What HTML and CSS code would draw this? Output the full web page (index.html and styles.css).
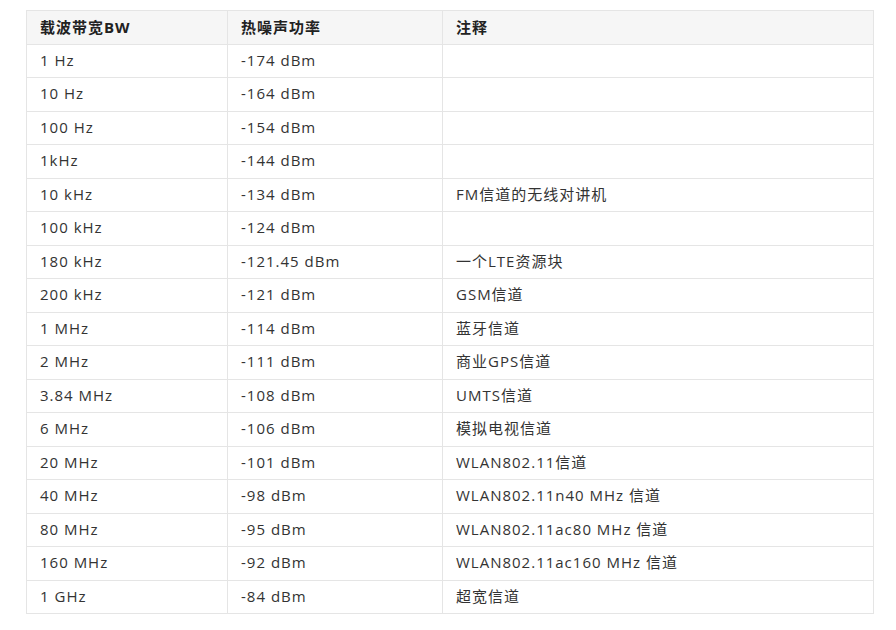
FILE: index.html
```html
<!DOCTYPE html>
<html lang="zh-CN">
<head>
<meta charset="utf-8">
<link rel="stylesheet" href="styles.css">
</head>
<body>
<div class="wrap">
<table class="data">
<colgroup><col class="c1"><col class="c2"><col class="c3"></colgroup>
<thead>
<tr><th>载波带宽BW</th><th>热噪声功率</th><th>注释</th></tr>
</thead>
<tbody>
<tr><td>1 Hz</td><td>-174 dBm</td><td></td></tr>
<tr><td>10 Hz</td><td>-164 dBm</td><td></td></tr>
<tr><td>100 Hz</td><td>-154 dBm</td><td></td></tr>
<tr><td>1kHz</td><td>-144 dBm</td><td></td></tr>
<tr><td>10 kHz</td><td>-134 dBm</td><td>FM信道的无线对讲机</td></tr>
<tr><td>100 kHz</td><td>-124 dBm</td><td></td></tr>
<tr><td>180 kHz</td><td>-121.45 dBm</td><td>一个LTE资源块</td></tr>
<tr><td>200 kHz</td><td>-121 dBm</td><td>GSM信道</td></tr>
<tr><td>1 MHz</td><td>-114 dBm</td><td>蓝牙信道</td></tr>
<tr><td>2 MHz</td><td>-111 dBm</td><td>商业GPS信道</td></tr>
<tr><td>3.84 MHz</td><td>-108 dBm</td><td>UMTS信道</td></tr>
<tr><td>6 MHz</td><td>-106 dBm</td><td>模拟电视信道</td></tr>
<tr><td>20 MHz</td><td>-101 dBm</td><td>WLAN802.11信道</td></tr>
<tr><td>40 MHz</td><td>-98 dBm</td><td>WLAN802.11n40 MHz 信道</td></tr>
<tr><td>80 MHz</td><td>-95 dBm</td><td>WLAN802.11ac80 MHz 信道</td></tr>
<tr><td>160 MHz</td><td>-92 dBm</td><td>WLAN802.11ac160 MHz 信道</td></tr>
<tr><td>1 GHz</td><td>-84 dBm</td><td>超宽信道</td></tr>
</tbody>
</table>
</div>
</body>
</html>
```
FILE: styles.css
```css
html, body { margin: 0; padding: 0; background: #fff; }
body {
  font-family: "Open Sans", "Noto Sans CJK SC", sans-serif;
  font-size: 15px;
  letter-spacing: 1px;
  color: #333;
}
.wrap { padding: 10px 0 0 26px; }
.data {
  border-collapse: collapse;
  table-layout: fixed;
  width: 847px;
}
.c1 { width: 201px; }
.c2 { width: 215px; }
.c3 { width: 431px; }
.data th, .data td {
  border: 1px solid #e5e5e5;
  height: 33.5px;
  box-sizing: border-box;
  padding: 0 13px;
  text-align: left;
  vertical-align: middle;
  line-height: 20px;
}
.data td { padding-bottom: 2px; }
.data th { background: #f6f6f6; font-weight: 700; color: #222; }
```
